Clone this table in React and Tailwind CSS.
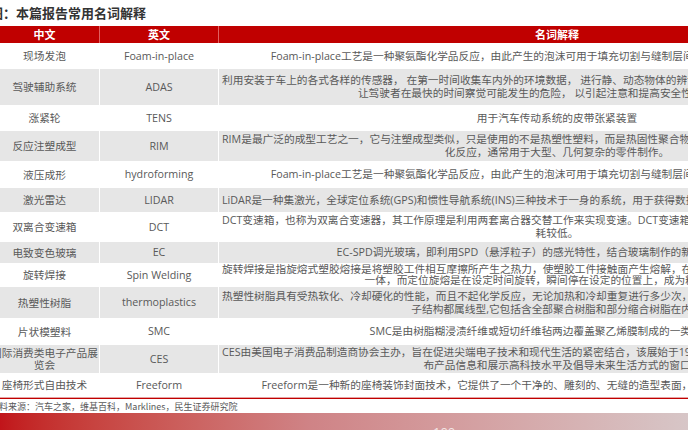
const rows = [
  {
    zh: ["现场发泡"],
    en: "Foam-in-place",
    h: "h-[26px]",
    desc: ["Foam-in-place工艺是一种聚氨酯化学品反应，由此产生的泡沫可用于填充切割与缝制层间的空隙，使座椅更加舒适贴合。"],
  },
  {
    zh: ["驾驶辅助系统"],
    en: "ADAS",
    h: "h-[36px]",
    desc: [
      "利用安装于车上的各式各样的传感器， 在第一时间收集车内外的环境数据， 进行静、动态物体的辨识、侦测与追踪等技术上的处理，并结合导航仪地图数据进行系统的运算与分析，从而能够",
      "让驾驶者在最快的时间察觉可能发生的危险， 以引起注意和提高安全性的主动安全。",
    ],
  },
  { zh: ["涨紧轮"], en: "TENS", h: "h-[26px]", desc: ["用于汽车传动系统的皮带张紧装置"] },
  {
    zh: ["反应注塑成型"],
    en: "RIM",
    h: "h-[30px]",
    desc: [
      "RIM是最广泛的成型工艺之一，它与注塑成型类似，只是使用的不是热塑性塑料，而是热固性聚合物，两种液态组分在混合头中混合后注入模具中发生聚合固",
      "化反应，通常用于大型、几何复杂的零件制作。",
    ],
  },
  {
    zh: ["液压成形"],
    en: "hydroforming",
    h: "h-[27px]",
    desc: ["Foam-in-place工艺是一种聚氨酯化学品反应，由此产生的泡沫可用于填充切割与缝制层间的空隙，使座椅更加舒适贴合。"],
  },
  {
    zh: ["激光雷达"],
    en: "LIDAR",
    h: "h-[24px]",
    desc: ["LiDAR是一种集激光，全球定位系统(GPS)和惯性导航系统(INS)三种技术于一身的系统，用于获得数据并生成精确的数字高程模型DEM，广泛应用于自动驾驶领域。"],
  },
  {
    zh: ["双离合变速箱"],
    en: "DCT",
    h: "h-[30px]",
    desc: [
      "DCT变速箱，也称为双离合变速器，其工作原理是利用两套离合器交替工作来实现变速。DCT变速箱换挡迅速、传动效率高、动力无中断、燃油经济性好、油",
      "耗较低。",
    ],
  },
  {
    zh: ["电致变色玻璃"],
    en: "EC",
    h: "h-[21px]",
    desc: ["EC-SPD调光玻璃，即利用SPD（悬浮粒子）的感光特性，结合玻璃制作的新型特种光电玻璃。"],
  },
  {
    zh: ["旋转焊接"],
    en: "Spin Welding",
    h: "h-[24px]",
    tight: true,
    desc: [
      "旋转焊接是指旋熔式塑胶熔接是将塑胶工件相互摩擦所产生之热力，使塑胶工件接触面产生熔解，在外力作用下冷却固化后两者牢固地熔合成为",
      "一体，而定位旋熔是在设定时间旋转，瞬间停在设定的位置上，成为精准的一体。",
    ],
  },
  {
    zh: ["热塑性树脂"],
    en: "thermoplastics",
    h: "h-[31px]",
    desc: [
      "热塑性树脂具有受热软化、冷却硬化的性能，而且不起化学反应，无论加热和冷却重复进行多少次，均能保持这种性能。凡具有热塑性树脂其高分子的分",
      "子结构都属线型,它包括含全部聚合树脂和部分缩合树脂在内。",
    ],
  },
  {
    zh: ["片状模塑料"],
    en: "SMC",
    h: "h-[27px]",
    desc: ["SMC是由树脂糊浸渍纤维或短切纤维毡两边覆盖聚乙烯膜制成的一类片状模塑料"],
  },
  {
    zh: ["国际消费类电子产品展", "览会"],
    en: "CES",
    h: "h-[28px]",
    desc: [
      "CES由美国电子消费品制造商协会主办，旨在促进尖端电子技术和现代生活的紧密结合，该展始于1967年，已成为全球各大电子产品企业和消费电子厂商发",
      "布产品信息和展示高科技水平及倡导未来生活方式的窗口",
    ],
  },
  {
    zh: ["座椅形式自由技术"],
    en: "Freeform",
    h: "h-[24px]",
    desc: ["Freeform是一种新的座椅装饰封面技术，它提供了一个干净的、雕刻的、无缝的造型表面，同时简化了座椅的制造工艺流程。"],
  },
];

export default function App() {
  return (
    <div className="h-[430px] w-[688px] overflow-hidden bg-white font-['Open_Sans','Noto_Sans_CJK_SC',sans-serif] text-[#595959]">
      <div className="-ml-[10px] w-[905px]">
        <div className="flex h-[26px] items-center text-[13px] font-bold text-[#333333] font-['Noto_Sans_CJK_SC',sans-serif]">
          图：本篇报告常用名词解释
        </div>

        <div className="grid h-[17px] grid-cols-[110px_119px_676px] bg-[#c00000] text-[11px] font-bold text-white font-['Noto_Sans_CJK_SC',sans-serif]">
          <div className="flex items-center justify-center border-r border-[#e06060]">中文</div>
          <div className="flex items-center justify-center border-r border-[#e06060]">英文</div>
          <div className="flex items-center justify-center">名词解释</div>
        </div>

        {rows.map((row, i) => (
          <div
            key={row.en + i}
            className={`grid grid-cols-[110px_119px_676px] text-[10.7px] ${row.h} ${i % 2 === 1 ? "bg-[#e6e6e6]" : "bg-white"}`}
          >
            <div className="flex flex-col justify-center border-r border-white text-center leading-[12px]">
              {row.zh.map((t) => (
                <div key={t} className="whitespace-nowrap">{t}</div>
              ))}
            </div>
            <div className="flex items-center justify-center border-r border-white whitespace-nowrap">{row.en}</div>
            <div className={`flex flex-col justify-center overflow-hidden px-[3px] ${row.tight ? "leading-[11px]" : "leading-[13px]"}`}>
              {row.desc.map((t) => (
                <div key={t} className="whitespace-nowrap text-center">{t}</div>
              ))}
            </div>
          </div>
        ))}

        <div className="h-[2px] border-t border-[#e7a3a3] bg-[#c00000]" />

        <div className="flex h-[14px] items-center text-[9px] leading-none font-['Noto_Sans_CJK_SC',sans-serif]">
          资料来源：汽车之家，维基百科，Marklines，民生证券研究院
        </div>
      </div>

      <div className="h-[17px] bg-linear-to-r from-[#c1141a] via-[#cf8386] via-45% to-[#d7c6c7] pl-[433px] pt-[13px] text-[13px] leading-none text-[#f3e6e6]">
        100
      </div>
    </div>
  );
}
